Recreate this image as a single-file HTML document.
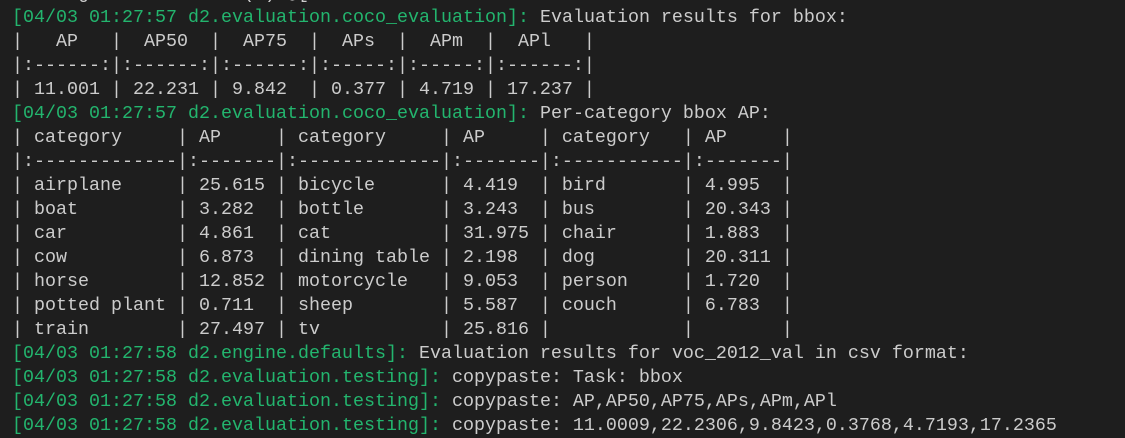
<!DOCTYPE html>
<html><head><meta charset="utf-8"><style>
html,body{margin:0;padding:0;background:#1e1e1e;width:1125px;height:437px;overflow:hidden}
pre{margin:0;position:absolute;left:12px;top:-18px;font-family:"Liberation Mono",monospace;font-size:18.33px;line-height:24px;color:#cccccc;white-space:pre}
.g{color:#23b56e}
</style></head><body><pre>      g              (s) @[      
<span class="g">[04/03 01:27:57 d2.evaluation.coco_evaluation]:</span> Evaluation results for bbox:
|   AP   |  AP50  |  AP75  |  APs  |  APm  |  APl   |
|:------:|:------:|:------:|:-----:|:-----:|:------:|
| 11.001 | 22.231 | 9.842  | 0.377 | 4.719 | 17.237 |
<span class="g">[04/03 01:27:57 d2.evaluation.coco_evaluation]:</span> Per-category bbox AP:
| category     | AP     | category     | AP     | category   | AP     |
|:-------------|:-------|:-------------|:-------|:-----------|:-------|
| airplane     | 25.615 | bicycle      | 4.419  | bird       | 4.995  |
| boat         | 3.282  | bottle       | 3.243  | bus        | 20.343 |
| car          | 4.861  | cat          | 31.975 | chair      | 1.883  |
| cow          | 6.873  | dining table | 2.198  | dog        | 20.311 |
| horse        | 12.852 | motorcycle   | 9.053  | person     | 1.720  |
| potted plant | 0.711  | sheep        | 5.587  | couch      | 6.783  |
| train        | 27.497 | tv           | 25.816 |            |        |
<span class="g">[04/03 01:27:58 d2.engine.defaults]:</span> Evaluation results for voc_2012_val in csv format:
<span class="g">[04/03 01:27:58 d2.evaluation.testing]:</span> copypaste: Task: bbox
<span class="g">[04/03 01:27:58 d2.evaluation.testing]:</span> copypaste: AP,AP50,AP75,APs,APm,APl
<span class="g">[04/03 01:27:58 d2.evaluation.testing]:</span> copypaste: 11.0009,22.2306,9.8423,0.3768,4.7193,17.2365</pre></body></html>
